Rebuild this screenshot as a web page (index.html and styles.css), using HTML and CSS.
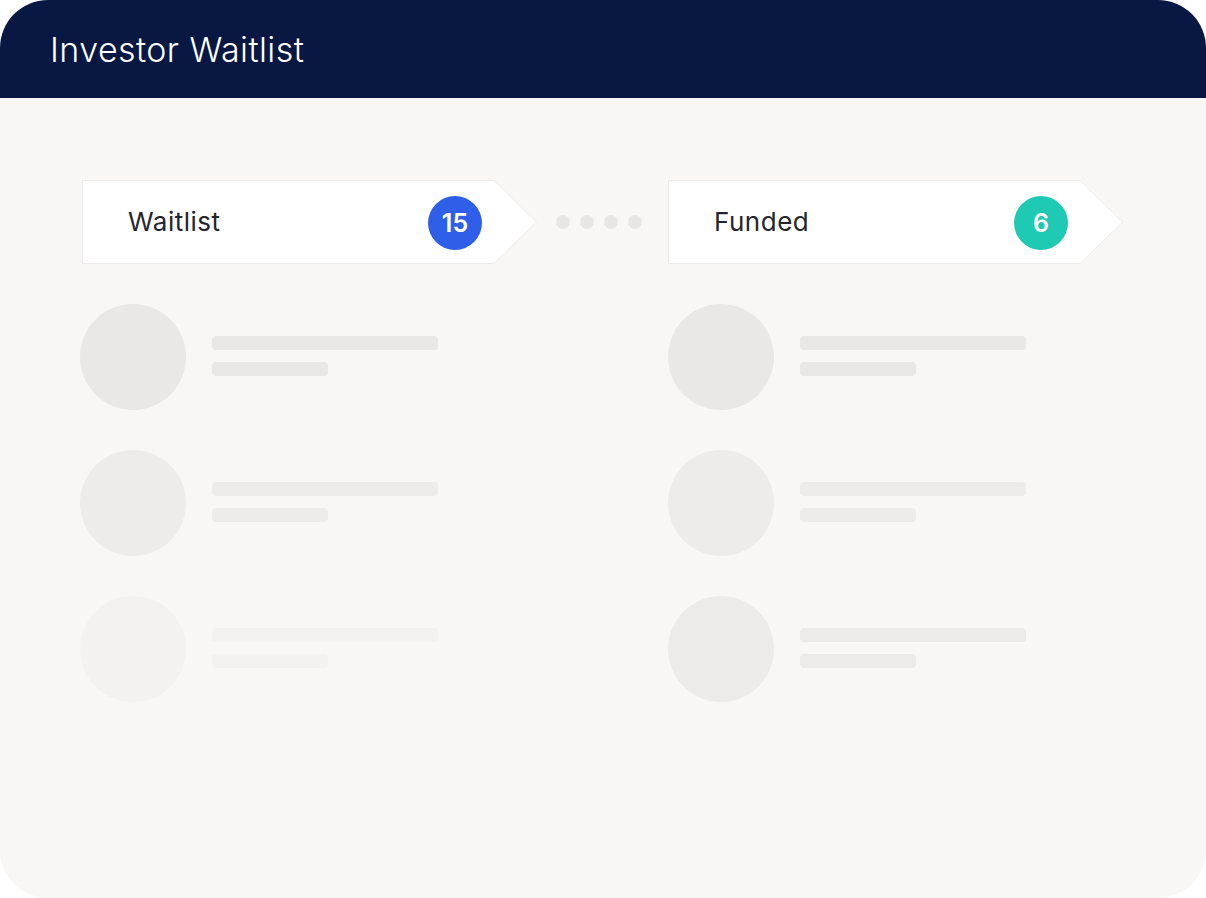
FILE: index.html
```html
<!DOCTYPE html>
<html>
<head>
<meta charset="utf-8">
<link rel="stylesheet" href="styles.css">
</head>
<body>
<div class="card">
  <div class="header">Investor Waitlist</div>
  <div class="board">
    <div class="tag tag-left">
      <div class="tag-inner">
        <span class="tag-label">Waitlist</span>
        <span class="badge badge-blue">15</span>
      </div>
    </div>
    <div class="dots">
      <span class="dot"></span><span class="dot"></span><span class="dot"></span><span class="dot"></span>
    </div>
    <div class="tag">
      <div class="tag-inner">
        <span class="tag-label">Funded</span>
        <span class="badge badge-teal">6</span>
      </div>
    </div>

    <div class="list list-left">
      <div class="row shade-1"><div class="avatar"></div><div class="lines"><div class="line long"></div><div class="line short"></div></div></div>
      <div class="row shade-2"><div class="avatar"></div><div class="lines"><div class="line long"></div><div class="line short"></div></div></div>
      <div class="row shade-3"><div class="avatar"></div><div class="lines"><div class="line long"></div><div class="line short"></div></div></div>
    </div>
    <div class="list list-right">
      <div class="row shade-1"><div class="avatar"></div><div class="lines"><div class="line long"></div><div class="line short"></div></div></div>
      <div class="row shade-2"><div class="avatar"></div><div class="lines"><div class="line long"></div><div class="line short"></div></div></div>
      <div class="row shade-2b"><div class="avatar"></div><div class="lines"><div class="line long"></div><div class="line short"></div></div></div>
    </div>
  </div>
</div>
</body>
</html>
```

FILE: styles.css
```css
html, body {
  margin: 0;
  padding: 0;
  background: #ffffff;
}

body {
  font-family: Inter, "Noto Sans", "Liberation Sans", sans-serif;
}

.card {
  width: 1206px;
  height: 898px;
  border-radius: 48px;
  overflow: hidden;
  background: #f8f7f5;
}

.header {
  height: 98px;
  box-sizing: border-box;
  background: #081843;
  color: #ffffff;
  display: flex;
  align-items: center;
  padding-left: 50px;
  padding-top: 1px;
  font-size: 34px;
  font-weight: 300;
  letter-spacing: 0.42px;
}

.board {
  display: grid;
  grid-template-columns: 457px 131px 455px;
  grid-template-rows: 84px auto;
  padding: 82px 0 0 80px;
}

.tag {
  width: 455px;
  height: 84px;
  background: #ecebe9;
  clip-path: polygon(0 0, calc(100% - 43px) 0, 100% 50%, calc(100% - 43px) 100%, 0 100%);
  box-sizing: border-box;
  padding: 1px;
}

.tag-left {
  margin-left: 2px;
}

.tag-inner {
  height: 100%;
  background: #ffffff;
  clip-path: polygon(0 0, calc(100% - 42px) 0, 100% 50%, calc(100% - 42px) 100%, 0 100%);
  display: flex;
  align-items: center;
  justify-content: space-between;
  padding: 0 54px 0 45px;
}

.tag-label {
  font-size: 26px;
  letter-spacing: 0.5px;
  color: #25252d;
  font-weight: 400;
  margin-top: -2px;
}

.badge {
  width: 54px;
  height: 54px;
  border-radius: 50%;
  display: flex;
  align-items: center;
  justify-content: center;
  color: #ffffff;
  font-size: 25px;
  font-weight: 600;
  margin-top: 1px;
}

.badge-blue {
  background: #2f5ee8;
}

.badge-teal {
  background: #1fcab5;
}

.dots {
  display: flex;
  align-items: center;
  justify-content: center;
  gap: 10px;
  padding-right: 7px;
}

.dot {
  width: 14px;
  height: 14px;
  border-radius: 50%;
  background: #e7e6e4;
}

.list {
  display: flex;
  flex-direction: column;
  gap: 40px;
  margin-top: 40px;
}

.list-left {
  grid-column: 1;
}

.list-right {
  grid-column: 3;
}

.row {
  display: flex;
  align-items: center;
  gap: 26px;
}

.avatar {
  width: 106px;
  height: 106px;
  border-radius: 50%;
  background: var(--shade);
}

.lines {
  display: flex;
  flex-direction: column;
  gap: 12px;
  margin-top: -2px;
}

.line {
  height: 14px;
  border-radius: 4px;
  background: var(--shade);
}

.line.long {
  width: 226px;
}

.line.short {
  width: 116px;
}

.shade-1 { --shade: #e9e8e6; }
.shade-2 { --shade: #edecea; }
.shade-2b { --shade: #ecebe9; }
.shade-3 { --shade: #f3f2f0; }
```
